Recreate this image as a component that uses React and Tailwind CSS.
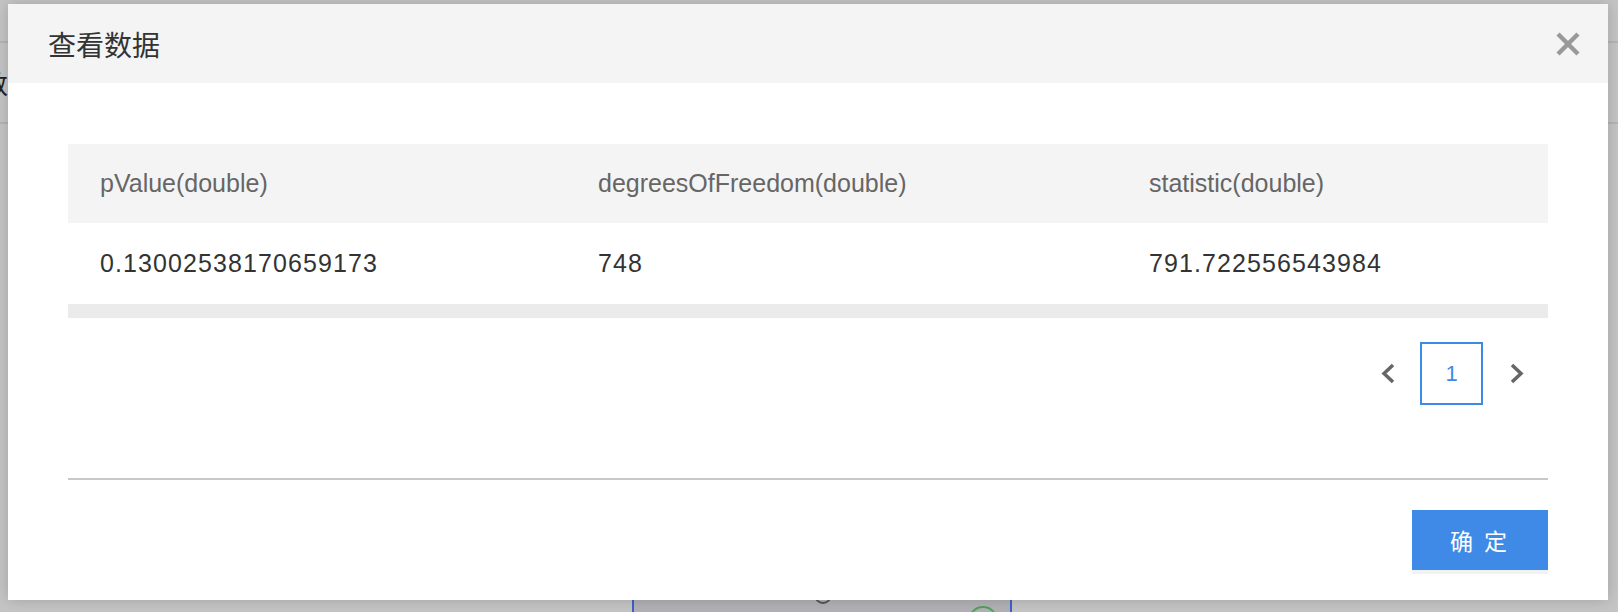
import React from 'react';

const cols = [
  { key: 'pValue', label: 'pValue(double)', width: 'w-[498px]' },
  { key: 'dof', label: 'degreesOfFreedom(double)', width: 'w-[551px]' },
  { key: 'stat', label: 'statistic(double)', width: 'flex-1' },
];

const rows = [
  { pValue: '0.13002538170659173', dof: '748', stat: '791.722556543984' },
];

function CloseIcon() {
  return (
    <svg width="26" height="26" viewBox="0 0 26 26">
      <path d="M3 3 L23 23 M23 3 L3 23" stroke="#999999" strokeWidth="4.5" />
    </svg>
  );
}

function Chevron({ dir }) {
  const d = dir === 'left' ? 'M12 2 L3 10.5 L12 19' : 'M2 2 L11 10.5 L2 19';
  return (
    <svg width="14" height="21" viewBox="0 0 14 21">
      <path d={d} stroke="#666666" strokeWidth="3.5" fill="none" />
    </svg>
  );
}

// page behind the dialog, already dimmed by the overlay
function Backdrop() {
  return (
    <div className="absolute inset-0 flex flex-col bg-[#c5c5c5]">
      <div className="h-[43px] shrink-0 border-b-2 border-[#b5b5b5]" />
      <div className="h-[81px] shrink-0 border-b-2 border-[#b5b5b5] flex items-center overflow-hidden">
        <span className="-ml-[18px] text-[26px] text-[#222] font-['Noto_Sans_CJK_SC',sans-serif]">数</span>
      </div>
      <div className="flex-1 pt-[474px] pl-[632px]">
        <div className="relative w-[380px] h-[60px] border-2 border-[#3b62d0] bg-[#b2b2b6]">
          <div className="absolute left-[180px] -top-[14px] w-[18px] h-[18px] rounded-full border-2 border-[#55555a]" />
          <div className="absolute left-[334px] top-[6px] w-[30px] h-[30px] rounded-full border-2 border-[#4fa35a]" />
        </div>
      </div>
    </div>
  );
}

export default function App() {
  return (
    <div className="relative w-[1618px] h-[612px] overflow-hidden font-['Liberation_Sans',Arial,sans-serif]">
      <Backdrop />

      <div className="absolute left-[8px] top-[4px] w-[1600px] h-[596px] bg-white shadow-[0_0_14px_rgba(0,0,0,0.18)] flex flex-col">
        <div className="h-[79px] shrink-0 bg-[#f4f4f4] flex items-center justify-between pl-[40px] pr-[27px]">
          <h2 className="text-[28px] text-[#333] font-['Noto_Sans_CJK_SC',sans-serif]">查看数据</h2>
          <button className="w-[26px] h-[26px] flex items-center justify-center">
            <CloseIcon />
          </button>
        </div>

        <div className="px-[60px] pt-[61px]">
          <div className="flex h-[79px] bg-[#f4f4f4] items-center text-[25px] text-[#666]">
            {cols.map((c) => (
              <div key={c.key} className={`${c.width} pl-[32px]`}>{c.label}</div>
            ))}
          </div>
          {rows.map((r, i) => (
            <div key={i} className="flex h-[81px] items-center text-[25px] text-[#333] tracking-[1.1px]">
              {cols.map((c) => (
                <div key={c.key} className={`${c.width} pl-[32px]`}>{r[c.key]}</div>
              ))}
            </div>
          ))}
          <div className="h-[14px] bg-[#ebebeb]" />

          <div className="flex justify-end items-center mt-[24px] pr-[24px]">
            <Chevron dir="left" />
            <div className="ml-[25px] mr-[27px] w-[63px] h-[63px] border-2 border-[#3e8ae6] flex items-center justify-center text-[22px] text-[#3e8ae6]">
              1
            </div>
            <Chevron dir="right" />
          </div>

          <div className="mt-[73px] h-[2px] bg-[#c8c8c8]" />

          <div className="flex justify-end mt-[30px]">
            <button className="w-[136px] h-[60px] bg-[#3f8ae6] text-white text-[23px] tracking-[3px] shadow-[0_4px_0_#f2f2f2] font-['Noto_Sans_CJK_SC',sans-serif]">
              确 定
            </button>
          </div>
        </div>
      </div>
    </div>
  );
}
